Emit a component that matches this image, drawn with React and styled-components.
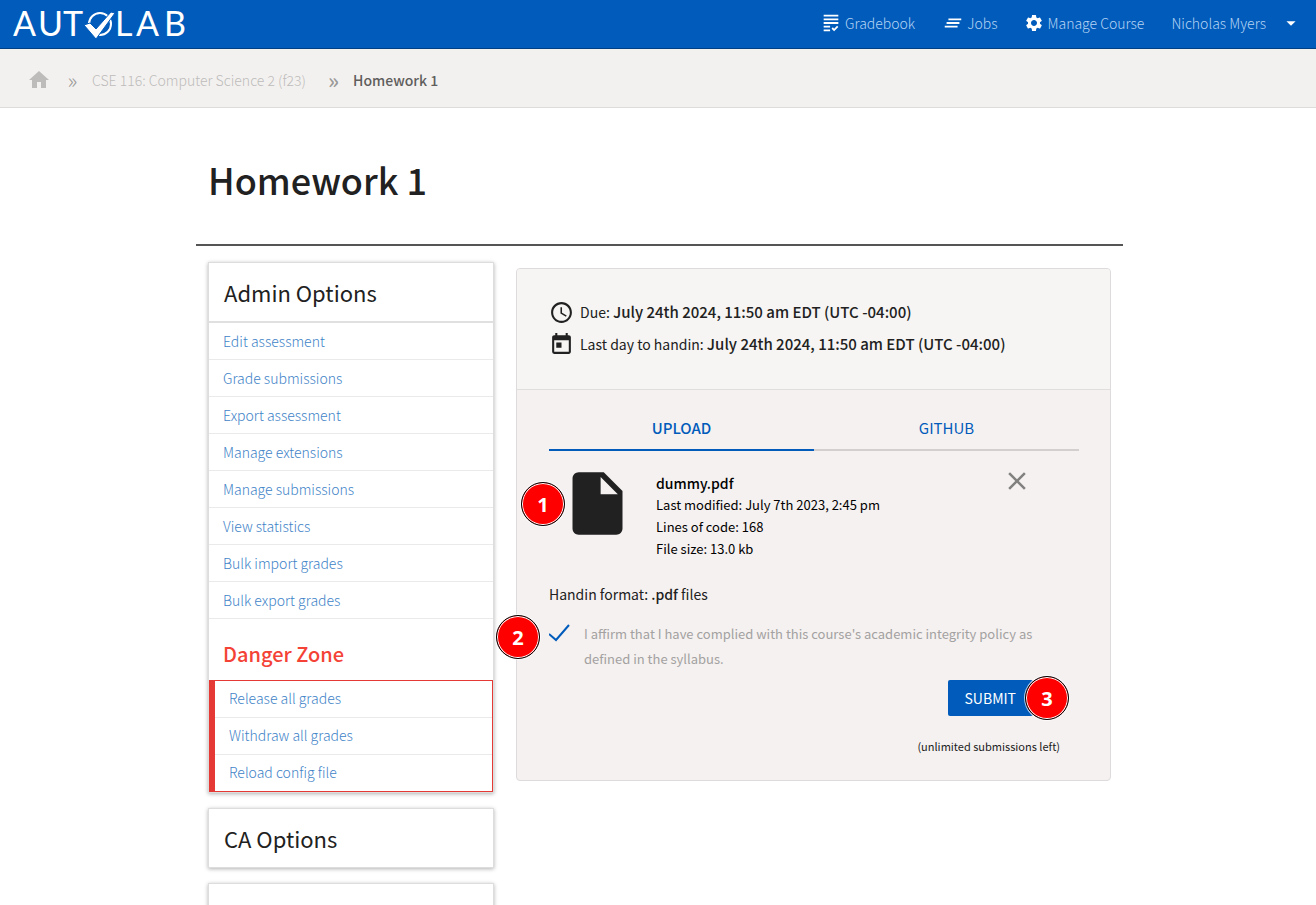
import React, { useState } from 'react';
import styled, { createGlobalStyle, css } from 'styled-components';
import {
  MdGrading,
  MdClearAll,
  MdSettings,
  MdArrowDropDown,
  MdHome,
  MdSchedule,
  MdToday,
  MdInsertDriveFile,
  MdClose,
} from 'react-icons/md';

const GlobalStyle = createGlobalStyle`
  * { box-sizing: border-box; }
  body {
    margin: 0;
    background: #fff;
    color: #212121;
    font-family: "Noto Sans CJK SC", "Noto Sans", sans-serif;
    font-size: 14px;
    line-height: 24px;
  }
  h1, h2, h3, p, ul { margin: 0; padding: 0; }
  ul { list-style: none; }
  a { text-decoration: none; }
  button { font-family: inherit; cursor: pointer; }
`;

/* ---------- top bar ---------- */

const TopBar = styled.header`
  display: flex;
  align-items: center;
  justify-content: space-between;
  height: 49px;
  padding: 0 14px 0 13px;
  background: #005bbb;
  border-bottom: 1px solid #003f82;
`;

const Logo = styled.a`
  display: flex;

  text {
    fill: #fff;
    font-family: Lato, sans-serif;
    font-size: 34px;
  }
`;

const NavList = styled.nav`
  display: flex;
  align-items: center;
  gap: 27px;
  height: 48px;
  padding-bottom: 3px;
`;

const NavLink = styled.a`
  display: flex;
  align-items: center;
  gap: 3px;
  color: #b5d3f3;
  font-weight: 300;

  svg { color: #fff; }
`;

const UserLink = styled(NavLink)`
  gap: 14px;
`;

/* ---------- breadcrumbs ---------- */

const Breadcrumbs = styled.nav`
  display: flex;
  align-items: center;
  height: 59px;
  padding: 4px 27px 0;
  background: #f3f1ef;
  border-bottom: 1px solid #dddcdb;
  color: #b0afae;

  a {
    display: flex;
    color: #bdbcbb;
    font-weight: 300;
  }
`;

const Separator = styled.span`
  width: ${(p) => (p.$wide ? 47 : 41)}px;
  padding: 0 0 3px ${(p) => (p.$wide ? 8 : 2)}px;
  text-align: center;
  color: #9a9998;
  font-size: 22px;
  font-weight: ${(p) => (p.$wide ? 500 : 300)};
`;

const Current = styled.span`
  color: #5f5e5d;
  font-weight: 500;
`;

/* ---------- page ---------- */

const Page = styled.main`
  padding: 0 193px 0 196px;
`;

const TitleBar = styled.div`
  padding: 41px 12px 35px;
  border-bottom: 2px solid #555;
`;

const Title = styled.h1`
  font-size: 36px;
  line-height: 60px;
  font-weight: 500;
`;

const Columns = styled.div`
  display: grid;
  grid-template-columns: 286px minmax(0, 1fr);
  gap: 22px;
  align-items: start;
  padding: 16px 12px 0;
`;

const Sidebar = styled.aside`
  display: grid;
  gap: 15px;
`;

const Card = styled.section`
  min-height: 60px;
  border: 1px solid #ddd;
  background: #fff;
  box-shadow: 0 1px 4px rgba(0, 0, 0, 0.3);
`;

const CardTitle = styled.h2`
  padding: 11px 15px;
  font-size: 22px;
  line-height: 36px;
  font-weight: 400;
`;

const OptionList = styled.ul`
  border-top: 2px solid #e0e0e0;
`;

const Option = styled.li`
  height: 37px;
  border-bottom: 1px solid #eaeaea;

  a {
    display: block;
    padding: 0 14px;
    line-height: 36px;
    color: #4183c8;
    font-weight: 300;
  }
`;

const DangerTitle = styled.h3`
  padding: 17px 14px 8px;
  color: #f44336;
  font-size: 20px;
  line-height: 36px;
  font-weight: 500;
`;

const DangerList = styled.ul`
  border: 1px solid #e53935;
  border-left-width: 6px;

  a { line-height: 34px; }

  li:last-child {
    height: 36px;
    border-bottom: 0;
  }
`;

/* ---------- submission panel ---------- */

const Panel = styled.section`
  margin-top: 6px;
  border: 1px solid #dddbdb;
  border-radius: 4px;
  background: #f5f1f0;
`;

const Deadlines = styled.div`
  padding: 27px 32px 29px;
  border-bottom: 1px solid #e0dedd;
  border-radius: 3px 3px 0 0;
  background: #f6f5f3;
`;

const Deadline = styled.p`
  display: flex;
  align-items: center;
  gap: 6px;
  line-height: 32px;

  b {
    font-size: 15px;
    font-weight: 500;
  }
`;

const Handin = styled.form`
  padding: 17px 31px 24px 32px;
`;

const Tabs = styled.div`
  display: grid;
  grid-template-columns: 1fr 1fr;
`;

const Tab = styled.button`
  height: 44px;
  padding: 0;
  border: 0;
  border-bottom: 2px solid #d2cfce;
  background: none;
  color: #005bbb;
  font-size: 15px;
  line-height: 42px;

  ${(p) =>
    p.$active &&
    css`
      border-color: #005bbb;
      font-weight: 500;
    `}
`;

const FileRow = styled.div`
  position: relative;
  display: grid;
  grid-template-columns: 96px 1fr auto;
  align-items: start;
  margin-top: 15px;
  padding: 0 47px 0 11px;
`;

const FileInfo = styled.div`
  padding-top: 6px;
  color: #000;
  font-size: 13px;
  line-height: 22px;

  p { height: 22px; }

  b {
    font-size: 14px;
    font-weight: 500;
  }
`;

const CloseButton = styled.button`
  display: flex;
  padding: 0;
  border: 0;
  background: none;
  color: #828180;
`;

const Format = styled.p`
  margin-top: 22px;

  b { font-weight: 500; }
`;

const Affirm = styled.div`
  position: relative;
  display: grid;
  grid-template-columns: 35px 1fr;
  margin-top: 15px;

  label {
    color: #a3a1a1;
    font-size: 13px;
    line-height: 25px;
  }
`;

const CheckBox = styled.span`
  display: grid;
  width: 22px;
  height: 24px;

  input, svg { grid-area: 1 / 1; }

  input {
    width: 22px;
    height: 22px;
    margin: 0;
    appearance: none;
  }

  svg {
    pointer-events: none;
    fill: none;
    stroke: #005bbb;
    stroke-width: 2;
    visibility: hidden;
  }

  input:checked + svg { visibility: visible; }
`;

const Actions = styled.div`
  display: flex;
  flex-direction: column;
  align-items: flex-end;
  gap: 20px;
  margin-top: 9px;
  padding-right: 19px;
`;

const SubmitWrap = styled.div`
  position: relative;
  margin-right: 27px;
`;

const SubmitButton = styled.button`
  display: block;
  height: 36px;
  padding: 0 17px;
  border: 0;
  border-radius: 2px;
  background: #005bbb;
  color: #fff;
  font-size: 14px;
  line-height: 36px;
`;

const Remaining = styled.p`
  font-size: 11px;
  line-height: 20px;
`;

const Badge = styled.span`
  position: absolute;
  top: ${(p) => p.$top}px;
  left: ${(p) => p.$left};
  width: 44px;
  height: 44px;
  border: 1px solid #000;
  border-radius: 50%;
  background: #f00;
  box-shadow: inset 0 0 0 1px #fff, 0 0 0 1px rgba(255, 255, 255, 0.7);
  color: #fff;
  font-family: "Open Sans", sans-serif;
  font-size: 20px;
  line-height: 44px;
  font-weight: 700;
  text-align: center;
`;

const adminOptions = [
  'Edit assessment',
  'Grade submissions',
  'Export assessment',
  'Manage extensions',
  'Manage submissions',
  'View statistics',
  'Bulk import grades',
  'Bulk export grades',
];

const dangerOptions = ['Release all grades', 'Withdraw all grades', 'Reload config file'];

function LogoArt() {
  return (
    <svg width="174" height="48" viewBox="0 0 174 48" aria-hidden="true">
      <text x="0 25 50" y="36">AUT</text>
      <circle cx="87" cy="24" r="11" fill="none" stroke="#fff" strokeWidth="2" />
      <path
        d="M71 25 L77 23 L83 29 L98 12 L102 13 L83 39 Z"
        fill="#fff"
        stroke="#005bbb"
        strokeWidth="1"
      />
      <text x="102 123 151" y="36">LAB</text>
    </svg>
  );
}

function Options({ items }) {
  return items.map((item) => (
    <Option key={item}>
      <a href="#">{item}</a>
    </Option>
  ));
}

export default function App() {
  const [tab, setTab] = useState('UPLOAD');

  return (
    <>
      <GlobalStyle />
      <TopBar>
        <Logo href="#" aria-label="Autolab">
          <LogoArt />
        </Logo>
        <NavList>
          <NavLink href="#"><MdGrading size={22} />Gradebook</NavLink>
          <NavLink href="#"><MdClearAll size={22} />Jobs</NavLink>
          <NavLink href="#"><MdSettings size={20} />Manage Course</NavLink>
          <UserLink href="#">Nicholas Myers<MdArrowDropDown size={22} /></UserLink>
        </NavList>
      </TopBar>

      <Breadcrumbs>
        <a href="#" aria-label="Home"><MdHome size={24} /></a>
        <Separator>»</Separator>
        <a href="#">CSE 116: Computer Science 2 (f23)</a>
        <Separator $wide>»</Separator>
        <Current>Homework 1</Current>
      </Breadcrumbs>

      <Page>
        <TitleBar>
          <Title>Homework 1</Title>
        </TitleBar>
        <Columns>
          <Sidebar>
            <Card>
              <CardTitle>Admin Options</CardTitle>
              <OptionList><Options items={adminOptions} /></OptionList>
              <DangerTitle>Danger Zone</DangerTitle>
              <DangerList><Options items={dangerOptions} /></DangerList>
            </Card>
            <Card>
              <CardTitle>CA Options</CardTitle>
            </Card>
            <Card />
          </Sidebar>

          <Panel>
            <Deadlines>
              <Deadline>
                <MdSchedule size={25} />
                <span>Due: <b>July 24th 2024, 11:50 am EDT (UTC -04:00)</b></span>
              </Deadline>
              <Deadline>
                <MdToday size={25} />
                <span>Last day to handin: <b>July 24th 2024, 11:50 am EDT (UTC -04:00)</b></span>
              </Deadline>
            </Deadlines>
            <Handin onSubmit={(e) => e.preventDefault()}>
              <Tabs role="tablist">
                {['UPLOAD', 'GITHUB'].map((name) => (
                  <Tab
                    key={name}
                    type="button"
                    role="tab"
                    aria-selected={tab === name}
                    $active={tab === name}
                    onClick={() => setTab(name)}
                  >
                    {name}
                  </Tab>
                ))}
              </Tabs>
              <FileRow>
                <Badge $top={16} $left="-28px">1</Badge>
                <MdInsertDriveFile size={75} />
                <FileInfo>
                  <p><b>dummy.pdf</b></p>
                  <p>Last modified: July 7th 2023, 2:45 pm</p>
                  <p>Lines of code: 168</p>
                  <p>File size: 13.0 kb</p>
                </FileInfo>
                <CloseButton type="button" aria-label="Remove file"><MdClose size={30} /></CloseButton>
              </FileRow>
              <Format>Handin format: <b>.pdf</b> files</Format>
              <Affirm>
                <Badge $top={-6} $left="-53px">2</Badge>
                <CheckBox>
                  <input id="affirm" type="checkbox" defaultChecked />
                  <svg width="22" height="24" viewBox="0 0 22 24" aria-hidden="true">
                    <path d="M0 13 L7 19 L20 4" />
                  </svg>
                </CheckBox>
                <label htmlFor="affirm">
                  I affirm that I have complied with this course's academic integrity policy as
                  defined in the syllabus.
                </label>
              </Affirm>
              <Actions>
                <SubmitWrap>
                  <SubmitButton type="submit">SUBMIT</SubmitButton>
                  <Badge $top={-4} $left="calc(100% - 8px)">3</Badge>
                </SubmitWrap>
                <Remaining>(unlimited submissions left)</Remaining>
              </Actions>
            </Handin>
          </Panel>
        </Columns>
      </Page>
    </>
  );
}
